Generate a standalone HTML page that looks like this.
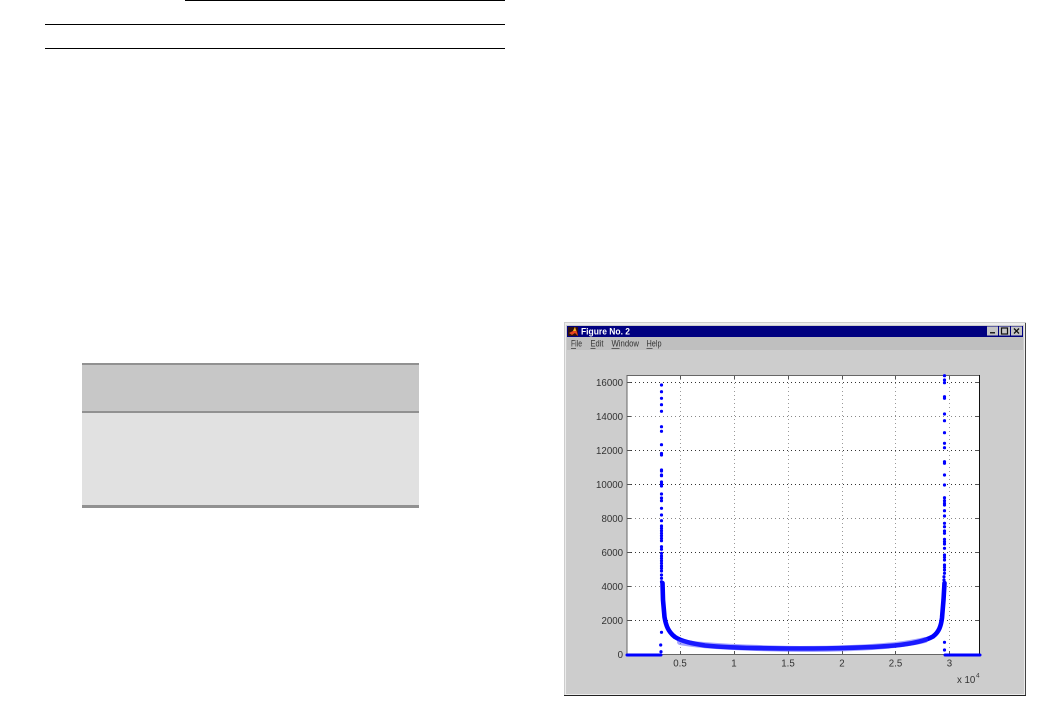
<!DOCTYPE html>
<html><head><meta charset="utf-8"><style>
html,body{margin:0;padding:0;background:#fff}
body{width:1047px;height:705px;overflow:hidden;position:relative}
svg{position:absolute;left:0;top:0}
text{font-family:"Liberation Sans",sans-serif}
.soft{filter:blur(.35px)}
</style></head><body>
<svg width="1047" height="705" viewBox="0 0 1047 705">
<!-- top rules -->
<rect x="185" y="0" width="320" height="1" fill="#000"/>
<rect x="45" y="24" width="460" height="1" fill="#000"/>
<rect x="45" y="48" width="460" height="1" fill="#000"/>
<!-- table -->
<rect x="82" y="363" width="337" height="48" fill="#c7c7c7"/>
<rect x="82" y="413" width="337" height="92" fill="#e1e1e1"/>
<rect x="82" y="363" width="337" height="2" fill="#919191"/>
<rect x="82" y="411" width="337" height="2" fill="#919191"/>
<rect x="82" y="505" width="337" height="3" fill="#919191"/>
<g class="soft">
<!-- window -->
<rect x="564" y="322" width="462" height="374" fill="#cdcdcd"/>
<rect x="565" y="323" width="460" height="372" fill="#ececec"/>
<rect x="566" y="325" width="458" height="369" fill="#cdcdcd"/>
<rect x="1025" y="323" width="1" height="373" fill="#444"/>
<rect x="564" y="695" width="462" height="1" fill="#222"/>
<rect x="567" y="337" width="456" height="13" fill="#bfbfbf"/>
<rect x="567" y="326" width="456" height="11" fill="#000080"/>
<!-- icon -->
<rect x="568" y="327" width="10" height="9" fill="#301010"/>
<path d="M569 333L573 331L575 327L577 332L578 336L575 333L572 335Z" fill="#e8461e"/>
<path d="M573 331L575 327L576 331Z" fill="#f4c020"/>
<text x="581" y="334.3" font-size="9" font-weight="bold" fill="#fff" textLength="49" lengthAdjust="spacingAndGlyphs">Figure No. 2</text>
<!-- buttons -->
<rect x="987" y="326.5" width="11" height="9" fill="#c4c4c4"/>
<rect x="990" y="332" width="5" height="1.5" fill="#222"/>
<rect x="999" y="326.5" width="11" height="9" fill="#c4c4c4"/>
<rect x="1001.5" y="328" width="6" height="6" fill="none" stroke="#111" stroke-width="1.2"/>
<rect x="1011" y="326.5" width="11" height="9" fill="#c4c4c4"/>
<path d="M1014 328.5L1019 333.5M1019 328.5L1014 333.5" stroke="#111" stroke-width="1.3"/>
<!-- menu -->
<g font-size="9" fill="#333">
<text x="571" y="346.7" textLength="11" lengthAdjust="spacingAndGlyphs">File</text>
<text x="590.5" y="346.7" textLength="13" lengthAdjust="spacingAndGlyphs">Edit</text>
<text x="611.5" y="346.7" textLength="27.5" lengthAdjust="spacingAndGlyphs">Window</text>
<text x="646.5" y="346.7" textLength="15" lengthAdjust="spacingAndGlyphs">Help</text>
</g>
<g fill="#444">
<rect x="571" y="348" width="5" height=".8"/>
<rect x="590.5" y="348" width="5" height=".8"/>
<rect x="611.5" y="348" width="8" height=".8"/>
<rect x="646.5" y="348" width="6" height=".8"/>
</g>
<!-- axes -->
<rect x="627" y="375" width="352.5" height="279.5" fill="#fff"/>
<g fill="none" stroke-width="1" stroke-dasharray="1 3">
<path d="M627 382.5H979M627 450.5H979M627 484.5H979M627 552.5H979M627 620.5H979" stroke="#333"/>
<path d="M627 416.5H979M627 518.5H979M627 586.5H979" stroke="#888"/>
<path d="M680.5 375V654M734.5 375V654M788.5 375V654M842.5 375V654M895.5 375V654M949.5 375V654" stroke="#999"/>
</g>
<path d="M627 375.5H979.5V654.5H627Z" fill="none" stroke="#666" stroke-width="1"/>
<path d="M979.5 375V654" stroke="#111"/>
<path d="M680.5 376V379M734.5 376V379M788.5 376V379M842.5 376V379M895.5 376V379M949.5 376V379M680.5 651V654M734.5 651V654M788.5 651V654M842.5 651V654M895.5 651V654M949.5 651V654M627 382.5H631M627 416.5H631M627 450.5H631M627 484.5H631M627 518.5H631M627 552.5H631M627 586.5H631M627 620.5H631M975 382.5H979M975 416.5H979M975 450.5H979M975 484.5H979M975 518.5H979M975 552.5H979M975 586.5H979M975 620.5H979" stroke="#555" fill="none"/>
<!-- labels -->
<g font-size="9.7" fill="#333" text-anchor="end">
<text x="623" y="386">16000</text>
<text x="623" y="420">14000</text>
<text x="623" y="454">12000</text>
<text x="623" y="488">10000</text>
<text x="623" y="522">8000</text>
<text x="623" y="556">6000</text>
<text x="623" y="590">4000</text>
<text x="623" y="624">2000</text>
<text x="623" y="658">0</text>
</g>
<g font-size="9.7" fill="#333" text-anchor="middle">
<text x="680" y="666.5">0.5</text>
<text x="734" y="666.5">1</text>
<text x="788" y="666.5">1.5</text>
<text x="842" y="666.5">2</text>
<text x="895.5" y="666.5">2.5</text>
<text x="949.5" y="666.5">3</text>
</g>
<text x="957" y="683" font-size="9.7" fill="#333">x 10</text>
<text x="976" y="677.5" font-size="6.5" fill="#333">4</text>
<!-- data -->
<g fill="none" stroke="#0000ff" stroke-linecap="round">
<path d="M627 655H661M945 655H980" stroke-width="3"/>
<path d="M662.5 583L663 600L664.5 617C666 626 668.5 632 675 637C682 641.5 692 643.5 705 645.5C725 647.5 760 648.5 800 648.5C840 648.5 870 647.5 895 645.5C910 644 925 641 933 636.5C939 632 941 626 942 618L943.5 600L944.5 583" stroke-width="4.6"/>
<path d="M680 642C700 646 740 648 800 649C860 649 900 646 925 640" stroke="#3a3aff" stroke-width="6" opacity=".45"/>
<path stroke-width="3.2" d="M661.5 385h0M661.5 391.7h0M661.5 398.3h0M661.5 404.7h0M661.5 411.3h0M661.5 426.7h0M661.5 431.3h0M661.5 444.7h0M661.5 453.5h0M661.5 455h0M661.5 470h0M661.5 475.7h0M661.5 471h0M661.5 475h0M661.5 482h0M661.5 484h0M661.5 486h0M661.5 494h0M661.5 498h0M661.5 500.7h0M661.5 508.3h0M661.5 515h0M661.5 520.7h0M661.5 526h0M661.5 528.3h0M661.5 530.7h0M661.5 533.3h0M661.5 535.7h0M661.5 538.3h0M661.5 540.7h0M661.5 546.7h0M661.5 549.3h0M661.5 553.3h0M661.5 556h0M661.5 558.3h0M661.5 560.7h0M661.5 563.3h0M661.5 566h0M661.5 568.3h0M661.5 571h0M661.5 575h0M661.5 578.3h0M661.5 581.7h0M661.5 632.3h0M660.7 645h0M661 651.7h0"/>
<path stroke-width="3.2" d="M944.5 375.7h0M944.5 380h0M944.5 382.7h0M944.5 396.7h0M944.5 398.3h0M944.5 414h0M944.5 420.7h0M944.5 432.7h0M944.5 443.3h0M944.5 447.7h0M944.5 461.7h0M944.5 463.3h0M944.5 475h0M944.5 485h0M944.5 497.7h0M944.5 500.7h0M944.5 503.3h0M944.5 505h0M944.5 510.7h0M944.5 516h0M944.5 523.3h0M944.5 526.7h0M944.5 531h0M944.5 533.3h0M944.5 539.3h0M944.5 541.7h0M944.5 544h0M944.5 548.3h0M944.5 555h0M944.5 557.3h0M944.5 560h0M944.5 565h0M944.5 567.3h0M944.5 570h0M944.5 573.3h0M944 576.7h0M944 580h0M944.5 642.3h0M944.5 650h0"/>
</g>
</g>
</svg>
</body></html>
